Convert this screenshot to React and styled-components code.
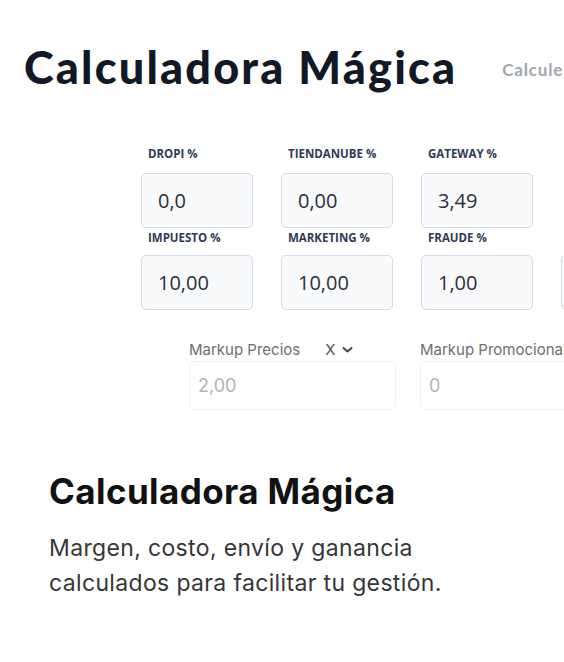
import React from "react";
import styled, { createGlobalStyle } from "styled-components";

const GlobalStyle = createGlobalStyle`
  html, body {
    margin: 0;
    padding: 0;
    background: #ffffff;
  }
  body {
    font-family: "Inter", "Liberation Sans", sans-serif;
  }
`;

// The product preview at the top, cut off by its frame
const Preview = styled.div`
  width: 564px;
  height: 430px;
  overflow: hidden;
`;

const Header = styled.div`
  display: flex;
  align-items: center;
  padding: 41px 0 0 24px;
  height: 52px;
  white-space: nowrap;
`;

const AppTitle = styled.h1`
  margin: 0;
  font-family: "Lato", "Liberation Sans", sans-serif;
  font-weight: 900;
  font-size: 45px;
  line-height: 52px;
  letter-spacing: 2.2px;
  color: #111827;
`;

const Divider = styled.span`
  width: 2px;
  height: 17px;
  background: #8f96a3;
  margin: 4px 23px 0 22px;
`;

const Subtitle = styled.span`
  font-family: "Lato", "Liberation Sans", sans-serif;
  font-weight: 700;
  font-size: 17px;
  letter-spacing: 0.8px;
  color: #a0a5ae;
  margin-top: 4px;
`;

const FieldGrid = styled.div`
  display: flex;
  flex-direction: column;
  gap: 3px;
  margin: 54px 0 0 141px;
`;

const FieldRow = styled.div`
  display: flex;
  gap: 28px;
`;

const Cell = styled.div`
  display: flex;
  flex-direction: column;
  width: 112px;
  flex-shrink: 0;
`;

const CellLabel = styled.div`
  font-family: "Open Sans", "Liberation Sans", sans-serif;
  font-weight: 700;
  font-size: 11.5px;
  line-height: 14px;
  height: 14px;
  color: #2f3b55;
  padding-left: 7px;
  margin-bottom: ${(p) => (p.$first ? 12 : 10)}px;
  white-space: nowrap;
`;

const CellInput = styled.div`
  box-sizing: border-box;
  height: 55px;
  border: 1.5px solid #d3dbe8;
  border-radius: 5px;
  background: #f8fafc;
  display: flex;
  align-items: center;
  padding-left: 16px;
  font-family: "Open Sans", "Liberation Sans", sans-serif;
  font-size: 20px;
  color: #2b2f36;
`;

const MarkupRow = styled.div`
  display: flex;
  gap: 24px;
  margin: 31px 0 0 189px;
`;

const MarkupField = styled.div`
  display: flex;
  flex-direction: column;
  width: 207px;
  flex-shrink: 0;
`;

const MarkupLabel = styled.div`
  display: flex;
  align-items: center;
  font-size: 15px;
  line-height: 18px;
  color: #6e6e6e;
  white-space: nowrap;
`;

const Unit = styled.span`
  display: inline-flex;
  align-items: center;
  gap: 7px;
  margin-left: 25px;
  color: #555;
`;

const MarkupInput = styled.div`
  box-sizing: border-box;
  margin-top: 2px;
  height: 49px;
  border: 1px solid #efefef;
  border-radius: 6px;
  display: flex;
  align-items: center;
  padding-left: 8px;
  font-size: 18px;
  color: #b3b3b3;
`;

const Feature = styled.section`
  padding: 41px 0 0 49px;
`;

const FeatureTitle = styled.h2`
  margin: 0;
  font-weight: 700;
  font-size: 35px;
  line-height: 40px;
  color: #111111;
  letter-spacing: 0.4px;
`;

const FeatureText = styled.p`
  margin: 20px 0 0;
  font-size: 23px;
  line-height: 35px;
  letter-spacing: 0.35px;
  color: #363636;
  width: 440px;
`;

const Chevron = () => (
  <svg width="11" height="8" viewBox="0 0 11 8" fill="none">
    <path d="M1.5 2l4 3.5 4-3.5" stroke="#444" strokeWidth="2" strokeLinecap="round" strokeLinejoin="round" />
  </svg>
);

const rows = [
  [
    { label: "DROPI %", value: "0,0" },
    { label: "TIENDANUBE %", value: "0,00" },
    { label: "GATEWAY %", value: "3,49" },
  ],
  [
    { label: "IMPUESTO %", value: "10,00" },
    { label: "MARKETING %", value: "10,00" },
    { label: "FRAUDE %", value: "1,00" },
    { label: "", value: "" },
  ],
];

export default function App() {
  return (
    <>
      <GlobalStyle />
      <Preview>
        <Header>
          <AppTitle>Calculadora Mágica</AppTitle>
          <Divider />
          <Subtitle>Calcule precios</Subtitle>
        </Header>

        <FieldGrid>
          {rows.map((row, i) => (
            <FieldRow key={i}>
              {row.map((f, j) => (
                <Cell key={j}>
                  <CellLabel $first={i === 0}>{f.label}</CellLabel>
                  <CellInput>{f.value}</CellInput>
                </Cell>
              ))}
            </FieldRow>
          ))}
        </FieldGrid>

        <MarkupRow>
          <MarkupField>
            <MarkupLabel>
              Markup Precios
              <Unit>
                X <Chevron />
              </Unit>
            </MarkupLabel>
            <MarkupInput>2,00</MarkupInput>
          </MarkupField>
          <MarkupField>
            <MarkupLabel>Markup Promocional</MarkupLabel>
            <MarkupInput>0</MarkupInput>
          </MarkupField>
        </MarkupRow>
      </Preview>

      <Feature>
        <FeatureTitle>Calculadora Mágica</FeatureTitle>
        <FeatureText>
          Margen, costo, envío y ganancia calculados para facilitar tu gestión.
        </FeatureText>
      </Feature>
    </>
  );
}
